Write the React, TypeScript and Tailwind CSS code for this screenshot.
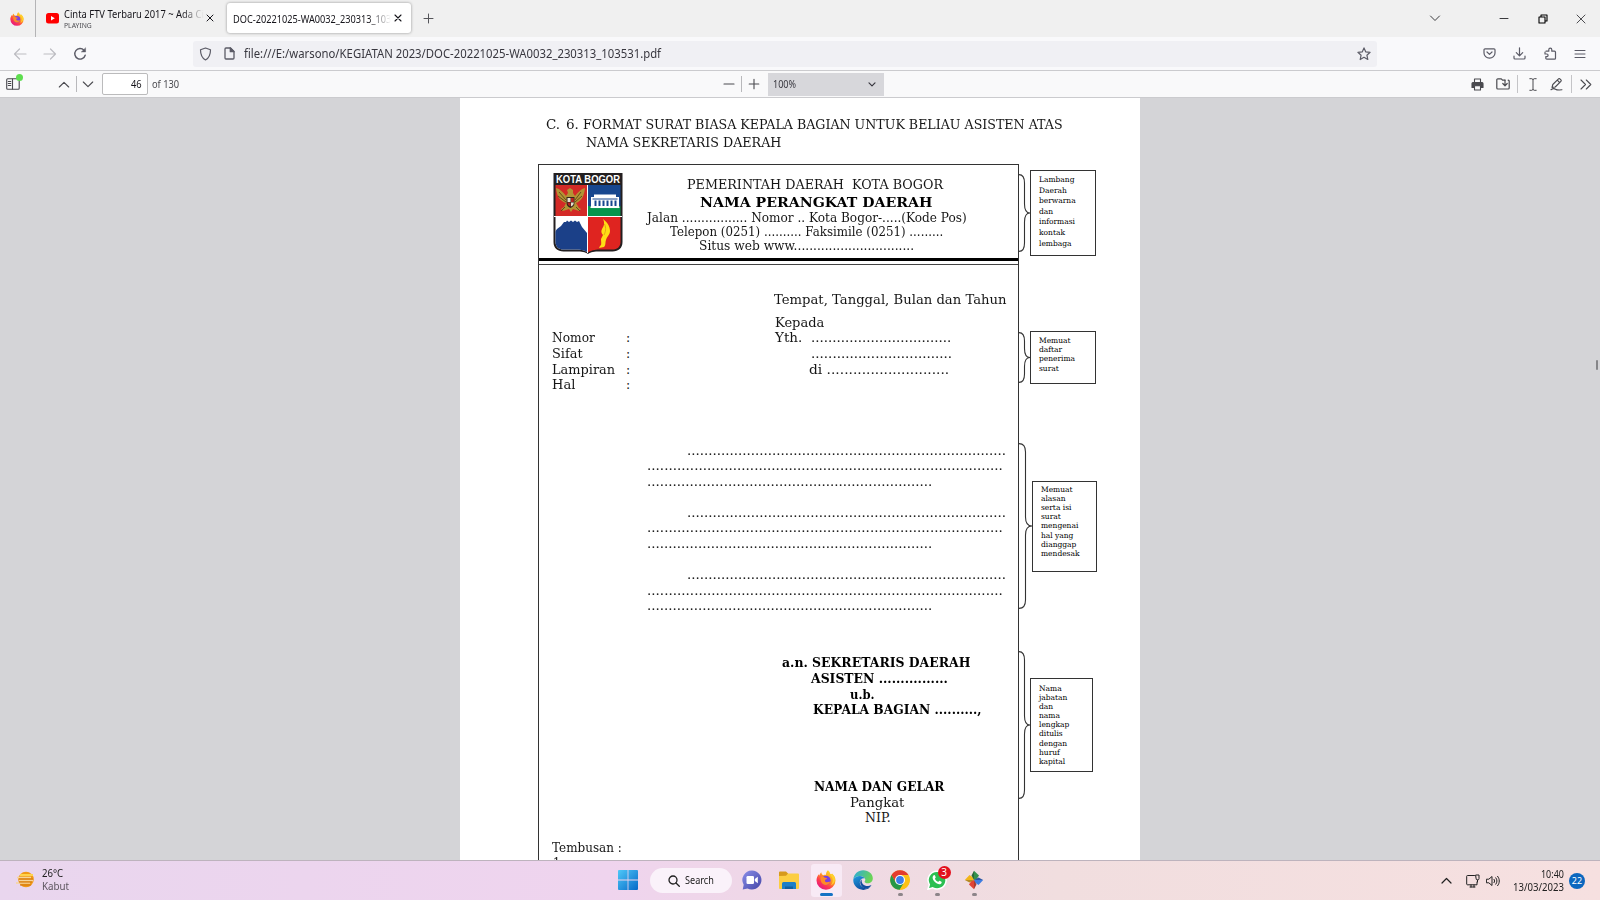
import React, { useLayoutEffect, useRef, useState } from 'react';

/** Text stretched horizontally so that it fills the width given in `className`. */
function Fit({ children, className = '' }: { children: string; className?: string }) {
  const outer = useRef<HTMLSpanElement>(null);
  const inner = useRef<HTMLSpanElement>(null);
  const [scale, setScale] = useState(1);
  useLayoutEffect(() => {
    if (!outer.current || !inner.current) return;
    setScale(outer.current.offsetWidth / inner.current.offsetWidth);
  }, [children]);
  return (
    <span ref={outer} className={`inline-block shrink-0 whitespace-pre ${className}`}>
      <span ref={inner} className="inline-block origin-left" style={{ transform: `scaleX(${scale})` }}>
        {children}
      </span>
    </span>
  );
}

function Line({ className = '', children }: { className?: string; children?: React.ReactNode }) {
  return <div className={`flex shrink-0 items-start leading-4 ${className}`}>{children}</div>;
}

function Svg({ className, box = '0 0 16 16', children, sw = 1.2 }: { className: string; box?: string; children: React.ReactNode; sw?: number }) {
  return (
    <svg className={`block shrink-0 ${className}`} viewBox={box} fill="none" stroke="currentColor" strokeWidth={sw} strokeLinecap="round" strokeLinejoin="round">
      {children}
    </svg>
  );
}

function FirefoxLogo({ className, id }: { className: string; id: string }) {
  return (
    <svg className={`block shrink-0 ${className}`} viewBox="0 0 20 20">
      <defs>
        <linearGradient id={id} x1="0.85" y1="0.05" x2="0.2" y2="0.95">
          <stop offset="0" stopColor="#ffe226" />
          <stop offset="0.4" stopColor="#ff9a1f" />
          <stop offset="0.7" stopColor="#ff3b4d" />
          <stop offset="1" stopColor="#e31587" />
        </linearGradient>
      </defs>
      <path fill={`url(#${id})`} d="M12 .3c1.300 1.300 2 2.300 2.300 3.600C15.500 4.200 16 4 16 3.500c2.200 1.800 3.500 4.300 3.500 7A9.500 9.300 0 0 1 .5 10.500C.5 8 1.500 5.600 2.800 4.200l.4 1.500C3.700 4.300 4.400 3 5.300 2.300c.1 1.400.7 2.400 2 2.900C8.500 4.900 9.300 4.800 10 4.900 9.900 3 10.700 1.300 12 .3Z" />
      <circle cx="10" cy="10.300" r="4.600" fill="#7b3fe0" />
      <path fill="#ff8a25" d="M4.600 7.200c1.600-.8 3.200-.6 4.400.5 1 .1 1.800.2 2 .5-.1.900-1.200 1.100-1.900 1.500-.4 1-.1 2.300 1.500 2.500 1.400.1 2.400-.8 3.600-.4-1 2.800-4.500 4.100-7.200 2.300C5.100 12.900 4.300 9.600 4.600 7.200Z" />
      <path fill="#ffd02e" d="M12 .3c2.800 2.700 2 5 4.300 7.500 1 2.700.2 6-1.900 7.800 4.200-1.500 5.900-6.500 3.500-9.800-.6 0-1.400-1-1.900-2.300 0 .5-.5.700-1.700.4C14 2.600 13.300 1.600 12 .3Z" />
    </svg>
  );
}

function TabBar() {
  return (
    <div className="flex h-[37px] shrink-0 items-start bg-[#f0f0f0] text-[#15141a]">
      <div className="flex h-[37px] w-9 items-center justify-center border-r border-[#b4b4b6]">
        <FirefoxLogo className="size-[14px] -translate-x-[1px]" id="ff-tab" />
      </div>
      <div className="flex h-[37px] w-[184px] pl-[10px]">
        <svg className="mt-[13px] block h-[11px] w-[13px] shrink-0" viewBox="0 0 13 11">
          <rect width="13" height="10.500" rx="2.500" fill="#f00" />
          <path d="M5 3v4.600l3.800-2.300Z" fill="#fff" />
        </svg>
        <div className="ml-[5px] w-[140px] pt-[6px] [mask-image:linear-gradient(to_right,#000_84%,transparent)]">
          <div className="h-[14px] text-[11px] leading-4"><Fit className="w-[140px]">Cinta FTV Terbaru 2017 ~ Ada Ci</Fit></div>
          <div className="text-[7.500px] leading-[11px] text-[#4b4b50]"><Fit className="w-[28px]">PLAYING</Fit></div>
        </div>
        <Svg className="mt-[14px] ml-[2px] size-2" box="0 0 8 8" sw={1}><path d="M1 1l6 6M7 1L1 7" /></Svg>
      </div>
      <div className="mt-[3px] ml-[7px] flex h-[30px] w-[184px] items-center rounded-[3px] bg-white pl-[6px] shadow-[0_0_3px_rgba(0,0,0,0.4)]">
        <div className="w-[158px] pt-px text-[11px] leading-4 [mask-image:linear-gradient(to_right,#000_86%,transparent)]"><Fit className="w-[158px]">DOC-20221025-WA0032_230313_103</Fit></div>
        <Svg className="ml-[3px] size-2" box="0 0 8 8" sw={1.1}><path d="M1 1l6 6M7 1L1 7" /></Svg>
      </div>
      <Svg className="mt-[13px] ml-[12px] size-[11px] text-[#55555a]" box="0 0 11 11" sw={1}><path d="M5.500 1v9M1 5.500h9" /></Svg>
      <div className="ml-auto flex h-[37px] items-center pr-[14px] text-[#3a3a3e]">
        <Svg className="mr-[58px] h-[7px] w-[12px]" box="0 0 12 7" sw={1}><path d="M1.500 1L6 5.500 10.500 1" /></Svg>
        <Svg className="mr-[29px] size-[10px]" box="0 0 10 10" sw={1}><path d="M1 4.500h8" /></Svg>
        <Svg className="mr-[28px] size-[10px] text-black" box="0 0 10 10" sw={1.1}><path d="M1 3h6v6H1zM3 3V1h6v6H7" /></Svg>
        <Svg className="size-[10px]" box="0 0 10 10" sw={0.9}><path d="M1 1l8 8M9 1L1 9" /></Svg>
      </div>
    </div>
  );
}

function AddressBar() {
  return (
    <div className="flex h-[33px] shrink-0 items-center bg-[#f9f9fb] text-[#5b5b66]">
      <Svg className="ml-[13px] size-[14px] text-[#bdbdc2]" box="0 0 14 14"><path d="M13 7H1.500M6.500 2l-5 5 5 5" /></Svg>
      <Svg className="ml-[16px] size-[14px] text-[#bdbdc2]" box="0 0 14 14"><path d="M1 7h11.500M7.500 2l5 5-5 5" /></Svg>
      <Svg className="ml-[16px] size-[14px]" box="0 0 14 14" sw={1.4}><path d="M12.200 8.200a5.300 5.300 0 1 1-1.200-5" /><path d="M12.600 1v4H8.500Z" fill="currentColor" strokeWidth=".4" /></Svg>
      <div className="ml-[106px] flex h-[26px] w-[1184px] items-center rounded-[3px] bg-[#f0f0f4]">
        <Svg className="ml-[6px] h-[14px] w-[13px]" box="0 0 13 14"><path d="M6.500 1l5 1.800c0 5-1.300 8.300-5 10.200-3.700-1.900-5-5.200-5-10.200Z" /></Svg>
        <Svg className="ml-[12px] h-[13px] w-[11px]" box="0 0 11 13" sw={1.300}><path d="M2 1h4.500L10 4.500V11a1 1 0 0 1-1 1H2a1 1 0 0 1-1-1V2a1 1 0 0 1 1-1Z" /><path d="M6.300 1v3.700H10Z" fill="currentColor" /></Svg>
        <div className="ml-[9px] pt-px text-[12px] leading-5 text-[#38373f]"><Fit className="w-[417px]">file:///E:/warsono/KEGIATAN 2023/DOC-20221025-WA0032_230313_103531.pdf</Fit></div>
        <Svg className="mr-[6px] ml-auto size-[14px]" box="0 0 14 14"><path d="M7 .9l1.800 4 4.300.4-3.200 2.900.9 4.300L7 10.300l-3.800 2.200.9-4.300L.9 5.300l4.300-.4Z" /></Svg>
      </div>
      <div className="ml-auto flex items-center pr-[14px]">
        <Svg className="mr-[17px] size-[13px]" box="0 0 13 13"><path d="M2 1.800h9a1 1 0 0 1 1 1v3.200a5.500 5.200 0 0 1-11 0V2.800a1 1 0 0 1 1-1Z" /><path d="M4 5l2.500 2.400L9 5" /></Svg>
        <Svg className="mr-[18px] size-[13px]" box="0 0 13 13"><path d="M6.500 .8v7.800M3.300 5.600l3.200 3.200 3.200-3.200M1 9v2a1 1 0 0 0 1 1h9a1 1 0 0 0 1-1V9" /></Svg>
        <Svg className="mr-[17px] size-[13px]" box="0 0 13 13"><path d="M2 4.200h2.800V2.700a1.500 1.500 0 0 1 3 0v1.500h2.700a1 1 0 0 1 1 1v6a1 1 0 0 1-1 1H2.800a1 1 0 0 1-1-1V9.600h1a1.300 1.300 0 0 0 0-2.600H1V5.200" /></Svg>
        <Svg className="h-[10px] w-[12px]" box="0 0 12 10" sw={1}><path d="M1 1.500h10M1 5h10M1 8.500h10" /></Svg>
      </div>
    </div>
  );
}

function PdfToolbar() {
  return (
    <div className="flex h-[28px] shrink-0 items-center justify-between border-y border-[#cbcbce] bg-[#f9f9fa] text-[#4a4a4f]">
      <div className="flex w-[500px] items-center text-[11px]">
        <div className="relative ml-[6px] w-[15px]">
          <Svg className="h-[12px] w-[14px]" box="0 0 14 12" sw={1.1}><rect x=".7" y=".8" width="12.500" height="10.400" rx="1" /><path d="M6.500 1v10M2.300 3.500h2.500M2.300 5.500h2.500M2.300 7.500h2.500" /></Svg>
          <span className="absolute -top-[4px] left-[10px] size-[7px] rounded-full bg-[#5ede4f]" />
        </div>
        <Svg className="ml-[37px] h-[7px] w-[12px]" box="0 0 12 7" sw={1.1}><path d="M1.300 6L6 1.300 10.700 6" /></Svg>
        <div className="mx-[6px] h-4 w-px bg-[#b8b8bb]" />
        <Svg className="-ml-px h-[7px] w-[12px]" box="0 0 12 7" sw={1.1}><path d="M1.300 1L6 5.700 10.700 1" /></Svg>
        <div className="ml-[8px] flex h-[22px] w-[46px] items-center justify-end rounded-[2px] border border-[#bbbbbc] bg-white pt-px pr-[5px] text-[#15141a]"><Fit className="w-[11px]">46</Fit></div>
        <div className="ml-[4px] pt-px"><Fit className="w-[27px]">of 130</Fit></div>
      </div>
      <div className="flex items-center">
        <Svg className="size-[12px]" box="0 0 12 12" sw={1.1}><path d="M1 6h10" /></Svg>
        <div className="mx-[6px] h-4 w-px bg-[#b8b8bb]" />
        <Svg className="size-[12px]" box="0 0 12 12" sw={1.1}><path d="M1.200 6h9.600M6 1.200v9.600" /></Svg>
        <div className="ml-[8px] flex h-[23px] w-[116px] items-center justify-between bg-[#d7d7db] pt-px pr-[8px] pl-[5px] text-[11px] text-[#38373f]">
          <Fit className="w-[23px]">100%</Fit>
          <Svg className="h-[5px] w-[8px]" box="0 0 8 5" sw={1.200}><path d="M1 .8l3 3 3-3" /></Svg>
        </div>
      </div>
      <div className="flex w-[494px] items-center justify-end pr-[8px]">
        <Svg className="mr-[12px] size-[13px]" box="0 0 13 13" sw={1.1}><path d="M3.500 4.500V1h6v3.500" /><path d="M2 4.500h9a1 1 0 0 1 1 1V9.500H1V5.500a1 1 0 0 1 1-1Z" fill="currentColor" /><path d="M3.500 7.800h6V12h-6Z" fill="#f9f9fa" /></Svg>
        <Svg className="mr-[7px] h-[12px] w-[14px]" box="0 0 14 12" sw={1.200}><path d="M9 2.200H6.500L5.300.8H1.800a1 1 0 0 0-1 1V10a1 1 0 0 0 1 1h10.400a1 1 0 0 0 1-1V3.200a1 1 0 0 0-1-1" /><path d="M9 2v5.500M6.800 5.500L9 7.800l2.200-2.300" /></Svg>
        <div className="mr-[11px] h-[18px] w-px bg-[#c4c4c7]" />
        <Svg className="mr-[13px] h-[13px] w-[8px]" box="0 0 8 13" sw={1}><path d="M.8.700h2L4 1.500 5.200.700h2M4 1.500v10M.8 12.300h2L4 11.500l1.200.8h2" /></Svg>
        <Svg className="mr-[8px] size-[13px]" box="0 0 13 13" sw={1.100}><path d="M2 9.500l.8-3L8.500.9a1 1 0 0 1 1.400 0l1 1a1 1 0 0 1 0 1.400L5.200 9ZM7.300 2.200l2.300 2.300M1 11.700c2-1.500 3.500-1.200 4.500-.5s2.500 1 6.500.6" /></Svg>
        <div className="mr-[8px] h-[18px] w-px bg-[#c4c4c7]" />
        <Svg className="h-[11px] w-[12px]" box="0 0 12 11" sw={1.100}><path d="M1 1l4.500 4.500L1 10M6.300 1l4.500 4.500L6.300 10" /></Svg>
      </div>
    </div>
  );
}

function CityCrest() {
  return (
    <svg className="mt-[8px] block h-[81px] w-[70px] shrink-0" viewBox="0 0 70 81">
      <defs>
        <clipPath id="crest"><path d="M2.500 11h65v58c0 5-3.500 7.500-8 7.500H47c-6 0-9 1-12 3-3-2-6-3-12-3H10.500c-4.500 0-8-2.500-8-7.500Z" /></clipPath>
      </defs>
      <path d="M.5 0h69v69c0 6-4 9.500-10 9.500H47c-6 0-9 .5-12 2.500-3-2-6-2.500-12-2.500H10.500C4.500 78.500.5 75 .5 69Z" fill="#231f20" />
      <g clipPath="url(#crest)">
        <rect x="1" y="12" width="33" height="31" fill="#d32a26" />
        <rect x="35" y="12" width="34" height="21" fill="#17478f" />
        <rect x="35" y="33" width="34" height="10" fill="#05944c" />
        <rect x="1" y="44" width="33" height="37" fill="#fff" />
        <path d="M1 60l3-4 4-3 3-4h2l1-1.500 2 1.500 2-1.500 2 1.500 2-1.500 2 1.500 2-1 3 6 5 6V81H1Z" fill="#1b4088" />
        <rect x="35" y="44" width="34" height="37" fill="#df2420" />
      </g>
      <path d="M34.500 12v68M1 43.500h68" stroke="#fff" strokeWidth="1" />
      <text x="35" y="9.600" textAnchor="middle" textLength="64" lengthAdjust="spacingAndGlyphs" fontFamily="Liberation Sans, sans-serif" fontSize="10" fontWeight="bold" fill="#fff">KOTA BOGOR</text>
      <path d="M3 15c4 1 7 4 10 8l2-3-1-3 3-2 3 2v3l2 3c3-4 6-7 10-8-1 9-4 13-9 15l3 5 2 1-2 2-6-2-2 3-2-3-6 2-2-2 3-2 2-4C7 28 4 24 3 15Z" fill="#b39335" />
      <path d="M6 19l7 8M5 23l8 6M28 19l-6 8M29 23l-7 6M12 34l-4 4M23 34l4 4" stroke="#594418" strokeWidth=".9" />
      <path d="M13.500 24h8v6c0 3-2 4-4 5-2-1-4-2-4-5Z" fill="#34241c" />
      <path d="M14.500 25h3v4h-3zM18 29.500h2.800c0 2-1 3-2.800 4z" fill="#e8e0cf" />
      <path d="M18 25h2.800v4H18zM14.500 29.500h3v4c-2-1-3-2-3-4z" fill="#b52320" />
      <path d="M38 24h28v10H38zM41 21.500h22V24H41z" fill="#fff" />
      <path d="M37.500 34.300h29" stroke="#fff" strokeWidth="1.500" />
      <path d="M39.500 26h25" stroke="#17478f" strokeWidth="1" />
      <path d="M42.500 27.500V33M46.500 27.500V33M50.500 27.500V33M54.500 27.500V33M58.500 27.500V33M62.500 27.500V33" stroke="#17478f" strokeWidth="2" />
      <path d="M50 46c4 3 7 7 7 12 0 4-3 5-4 9-1 3 0 5-2 7l-5 1 1-2c2-1 1-4 1-7l2-4c-2-2-2-4-1-6 2-3 3-6 1-10Z" fill="#ffde15" />
      <path d="M51.500 51c2 4 1 8-.5 11" stroke="#e59d17" strokeWidth=".9" fill="none" />
    </svg>
  );
}

function Letter() {
  return (
    <div className="flex h-[696px] w-[481px] shrink-0 flex-col overflow-hidden border-x border-t border-[#333] text-[12.5px] text-[#161616]">
      <div className="flex h-[93px] shrink-0 pl-[14px]">
        <CityCrest />
        <div className="flex flex-col pt-[12px]">
          <Line className="h-[17px] pl-[64px]"><Fit className="w-[256px]">PEMERINTAH DAERAH  KOTA BOGOR</Fit></Line>
          <Line className="h-[16px] pl-[77px] text-[13.5px] font-bold text-black"><Fit className="w-[233px]">NAMA PERANGKAT DAERAH</Fit></Line>
          <Line className="h-[14px] pl-[24px] text-[12px]"><Fit className="w-[320px]">Jalan ................. Nomor .. Kota Bogor-.....(Kode Pos)</Fit></Line>
          <Line className="h-[14px] pl-[47px] text-[12px]"><Fit className="w-[273px]">Telepon (0251) .......... Faksimile (0251) .........</Fit></Line>
          <Line className="h-[14px] pl-[76px] text-[12px]"><Fit className="w-[215px]">Situs web www...............................</Fit></Line>
        </div>
      </div>
      <div className="h-[7px] shrink-0 border-t-[3px] border-b border-t-black border-b-[#444]" />

      <Line className="mt-[27px] h-[23px] pl-[235px]"><Fit className="w-[232px]">Tempat, Tanggal, Bulan dan Tahun</Fit></Line>
      <Line className="h-[15px] pl-[236px]"><Fit className="w-[49px]">Kepada</Fit></Line>
      <Line className="h-[15.5px] pl-[13px]">
        <div className="w-[74px]"><Fit className="w-[43px]">Nomor</Fit></div>
        <div className="w-[149px]">:</div>
        <div className="w-[36px]"><Fit className="w-[27px]">Yth.</Fit></div>
        <Fit className="w-[140px]">.................................</Fit>
      </Line>
      <Line className="h-[16px] pl-[13px]">
        <div className="w-[74px]"><Fit className="w-[31px]">Sifat</Fit></div>
        <div className="w-[185px]">:</div>
        <Fit className="w-[141px]">.................................</Fit>
      </Line>
      <Line className="h-[15.5px] pl-[13px]">
        <div className="w-[74px]"><Fit className="w-[63px]">Lampiran</Fit></div>
        <div className="w-[183px]">:</div>
        <Fit className="w-[140px]">di ............................</Fit>
      </Line>
      <Line className="h-[65.5px] pl-[13px]">
        <div className="w-[74px]"><Fit className="w-[23px]">Hal</Fit></div>
        <div>:</div>
      </Line>

      {[0, 1, 2].map((i) => (
        <div key={i} className="h-[62.3px] shrink-0">
          <Line className="h-[15.5px] pl-[148px]"><Fit className="w-[319px]">...........................................................................</Fit></Line>
          <Line className="h-[15.5px] pl-[108px]"><Fit className="w-[356px]">...................................................................................</Fit></Line>
          <Line className="h-[15.5px] pl-[108px]"><Fit className="w-[285px]">...................................................................</Fit></Line>
        </div>
      ))}

      <div className="mt-[25.5px] shrink-0 font-bold text-black">
        <Line className="h-[16px] pl-[243px]"><Fit className="w-[188px]">a.n. SEKRETARIS DAERAH</Fit></Line>
        <Line className="h-[16px] pl-[272px]"><Fit className="w-[137px]">ASISTEN ................</Fit></Line>
        <Line className="h-[15.500px] pl-[311px]"><Fit className="w-[25px]">u.b.</Fit></Line>
        <Line className="h-[76.5px] pl-[274px]"><Fit className="w-[169px]">KEPALA BAGIAN ..........,</Fit></Line>
        <Line className="h-[16px] pl-[275px]"><Fit className="w-[130px]">NAMA DAN GELAR</Fit></Line>
      </div>
      <Line className="h-[15px] pl-[311px]"><Fit className="w-[54px]">Pangkat</Fit></Line>
      <Line className="h-[30px] pl-[326px]"><Fit className="w-[26px]">NIP.</Fit></Line>
      <Line className="h-[15px] pl-[13px]"><Fit className="w-[70px]">Tembusan :</Fit></Line>
      <Line className="h-[16px] pl-[14px]"><Fit className="w-[11px]">1.</Fit></Line>
    </div>
  );
}

function Bracket({ h, w }: { h: number; w: number }) {
  const x = w / 2;
  const m = h / 2;
  return (
    <svg className="block shrink-0" width={w} height={h} fill="none" stroke="#333" strokeWidth="1.1">
      <path d={`M0 .6Q${x} .6 ${x} 9V${m - 9}Q${x} ${m} ${w} ${m}Q${x} ${m} ${x} ${m + 9}V${h - 9}Q${x} ${h - 0.6} 0 ${h - 0.6}`} />
    </svg>
  );
}

function Note({ className, lines }: { className: string; lines: string[] }) {
  return (
    <div className={`border border-[#333] pl-[8px] text-[7.5px] text-black ${className}`}>
      {lines.map((l) => <div key={l} className="whitespace-pre">{l}</div>)}
    </div>
  );
}

function SideNotes() {
  return (
    <div className="flex flex-col pt-[6px]">
      <div className="flex h-[86px] shrink-0 items-center">
        <Bracket h={78} w={11} />
        <Note className="h-[86px] w-[66px] pt-[4px] leading-[10.6px]" lines={['Lambang', 'Daerah', 'berwarna', 'dan', 'informasi', 'kontak', 'lembaga']} />
      </div>
      <div className="mt-[75px] flex h-[53px] shrink-0 items-center">
        <Bracket h={51} w={11} />
        <Note className="h-[53px] w-[66px] pt-[4px] leading-[9.2px]" lines={['Memuat', 'daftar', 'penerima', 'surat']} />
      </div>
      <div className="mt-[59px] flex h-[166px] shrink-0 items-center">
        <Bracket h={166} w={13} />
        <Note className="h-[91px] w-[65px] pt-[3px] leading-[9.200px]" lines={['Memuat', 'alasan', 'serta isi', 'surat', 'mengenai', 'hal yang', 'dianggap', 'mendesak']} />
      </div>
      <div className="mt-[42px] flex h-[148px] shrink-0 items-center">
        <Bracket h={148} w={11} />
        <Note className="h-[94px] w-[63px] pt-[5px] leading-[9.100px]" lines={['Nama', 'jabatan', 'dan', 'nama', 'lengkap', 'ditulis', 'dengan', 'huruf', 'kapital']} />
      </div>
    </div>
  );
}

function Viewer() {
  return (
    <div className="flex min-h-0 flex-1 justify-center overflow-hidden bg-[#d4d4d7]">
      <div className="w-[460px] shrink-0" />
      <div className="w-[680px] shrink-0 bg-white [font-family:'DejaVu_Serif',serif]">
        <div className="h-[66px] pt-[19px] text-[12.5px] text-[#161616]">
          <Line className="h-[18px] pl-[86px]">
            <Fit className="w-[14px]">C.</Fit>
            <Fit className="ml-[6px] w-[13px]">6.</Fit>
            <Fit className="ml-[4px] w-[480px]">FORMAT SURAT BIASA KEPALA BAGIAN UNTUK BELIAU ASISTEN ATAS</Fit>
          </Line>
          <Line className="h-[16px] pl-[126px]"><Fit className="w-[195px]">NAMA SEKRETARIS DAERAH</Fit></Line>
        </div>
        <div className="flex pl-[78px]">
          <Letter />
          <SideNotes />
        </div>
      </div>
      <div className="flex w-[460px] shrink-0 justify-end pt-[262px] pr-[2px]">
        <div className="h-[10px] w-[2px] rounded-full bg-[#858588]" />
      </div>
    </div>
  );
}

function TaskSlot({ children, running }: { children: React.ReactNode; running?: boolean }) {
  return (
    <div className="flex h-[39px] w-[37px] shrink-0 flex-col items-center pt-[9px]">
      {children}
      {running && <div className="mt-[3px] h-[3px] w-[5px] shrink-0 rounded-full bg-[#8d8589]" />}
    </div>
  );
}

function Taskbar() {
  return (
    <div className="flex h-[40px] shrink-0 justify-between border-t border-[#bdb3bd] bg-[linear-gradient(90deg,#e9d6ee_0%,#efd4ee_38%,#efd9e4_52%,#f1dedf_66%,#f6e0e0_100%)] text-[#202020]">
      <div className="flex w-[500px] pl-[16px]">
        <svg className="mt-[9px] block h-[19px] w-[19px] shrink-0" viewBox="0 0 19 19">
          <circle cx="10" cy="9.500" r="7.800" fill="#f19a17" />
          <path d="M4 5h13" stroke="#ffd34d" strokeWidth="2" />
          <path d="M1 7.500h14M3 10.500h14M0 13h14" stroke="#f6d59a" strokeWidth="1.300" />
          <path d="M3 9h14M3 12h13M4 15h11" stroke="#cf7412" strokeWidth="1" />
        </svg>
        <div className="pt-[6px] pl-[7px] text-[10.5px] leading-[13px]">
          <div><Fit className="w-[21px]">26°C</Fit></div>
          <div className="text-[#5c555e]"><Fit className="w-[27px]">Kabut</Fit></div>
        </div>
      </div>
      <div className="flex">
        <svg className="mt-[9px] block size-[20px]" viewBox="0 0 20 20">
          <defs><linearGradient id="win" x1="0" y1="0" x2="1" y2="1"><stop offset="0" stopColor="#4fc8f8" /><stop offset="1" stopColor="#0669c8" /></linearGradient></defs>
          <path d="M0 1a1 1 0 0 1 1-1h8.600v9.600H0ZM10.400 0H19a1 1 0 0 1 1 1v8.600h-9.600ZM0 10.400h9.600V20H1a1 1 0 0 1-1-1ZM10.400 10.400H20V19a1 1 0 0 1-1 1h-8.600Z" fill="url(#win)" />
        </svg>
        <div className="mt-[7px] ml-[12px] flex h-[25px] w-[82px] items-center rounded-full bg-[#faf2fa] pl-[18px] text-[11px]">
          <Svg className="size-[12px]" box="0 0 12 12" sw={1.300}><circle cx="5" cy="5" r="4" /><path d="M8 8l3.300 3.300" /></Svg>
          <Fit className="ml-[5px] w-[29px]">Search</Fit>
        </div>
        <div className="w-[2px]" />
        <TaskSlot>
          <svg className="block size-[20px]" viewBox="0 0 20 20">
            <defs><linearGradient id="chat" x1="0" y1="0" x2="1" y2="1"><stop offset="0" stopColor="#8a8ee8" /><stop offset="1" stopColor="#4446a8" /></linearGradient></defs>
            <path d="M10 .5a9.500 9.500 0 1 1-4.500 17.900L.7 19.500l1-4.700A9.500 9.500 0 0 1 10 .5Z" fill="url(#chat)" />
            <rect x="4.500" y="6" width="7.500" height="8" rx="1.300" fill="#fff" /><path d="M12.800 9l3-2.200v6.400l-3-2.200Z" fill="#fff" />
          </svg>
        </TaskSlot>
        <TaskSlot>
          <svg className="block size-[20px]" viewBox="0 0 20 20">
            <path d="M0 2.500a1 1 0 0 1 1-1h6l2 2v3H0Z" fill="#d79a1c" />
            <path d="M0 6l7-.2 2-2.300h10a1 1 0 0 1 1 1V18a1 1 0 0 1-1 1H1a1 1 0 0 1-1-1Z" fill="#fcce42" />
            <path d="M3 19v-5.500a1.500 1.500 0 0 1 1.500-1.500h11a1.500 1.500 0 0 1 1.500 1.500V19Z" fill="#1c7fc7" /><path d="M6 16.500h8V19H6Z" fill="#125f9e" />
          </svg>
        </TaskSlot>
        <div className="mt-[3px] mr-[3px] ml-[3px] flex h-[33px] w-[31px] flex-col items-center rounded-[3px] bg-[#f8eaf5] pt-[6px]">
          <FirefoxLogo className="size-[20px]" id="ff-task" />
          <div className="mt-[3px] h-[3px] w-[13px] shrink-0 rounded-full bg-[#1573c4]" />
        </div>
        <TaskSlot>
          <svg className="block size-[20px]" viewBox="0 0 20 20">
            <defs>
              <linearGradient id="edge-a" x1="0" y1="0" x2="1" y2=".4"><stop offset="0" stopColor="#2aa9e0" /><stop offset="1" stopColor="#6ad455" /></linearGradient>
              <linearGradient id="edge-b" x1="0" y1="0" x2=".6" y2="1"><stop offset="0" stopColor="#1f9de0" /><stop offset="1" stopColor="#0c4a9c" /></linearGradient>
            </defs>
            <path d="M.3 9.500C.8 4 5 .2 10.200.2c5.500 0 9.600 3.800 9.600 8 0 3.200-2.400 5-5 5-2 0-3.200-.7-3.200-1.500 0-.5.7-.8.7-2C12.300 8 10 6 7 6 3.700 6 1.400 7.500.3 9.500Z" fill="url(#edge-a)" />
            <path d="M.3 9.500C1.400 7.300 4 6 6.700 6c2.500 0 4.300 1 5.100 2.300-2.600-.5-5 1.200-5 4 0 3.600 3.400 6 7 6 1.500 0 2.600-.6 3.600-1.200-1.700 1.800-4.300 2.800-7.200 2.800C4.500 19.800-.2 15.300.3 9.500Z" fill="url(#edge-b)" />
            <path d="M8.700 9.200c-.8 4.300 2.800 7.300 6.600 6.800 1.300-.1 2.500-.8 3.200-1-1.100 2.300-3 3.500-5.400 3.500-4.500 0-8-6.500-4.400-9.300Z" fill="#124f9e" />
          </svg>
        </TaskSlot>
        <TaskSlot running>
          <svg className="block size-[20px] shrink-0" viewBox="0 0 20 20">
            <circle cx="10" cy="10" r="9.800" fill="#fbc116" />
            <path d="M1.500 5A9.800 9.800 0 0 1 18.500 5.100H10L5.800 12.500Z" fill="#e33b2e" />
            <path d="M1.500 5a9.800 9.800 0 0 0 8.300 14.800l4.400-7.400H5.800Z" fill="#279847" />
            <path d="M18.500 5.100H10v4.900l4.200 2.400-4.400 7.400A9.800 9.800 0 0 0 18.500 5.100Z" fill="#fbc116" />
            <circle cx="10" cy="10" r="5" fill="#fff" /><circle cx="10" cy="10" r="3.900" fill="#3b7de9" />
          </svg>
        </TaskSlot>
        <div className="relative">
          <TaskSlot running>
            <svg className="block size-[20px] shrink-0" viewBox="0 0 20 20">
              <path d="M10 1.200A8.900 8.900 0 1 1 5.700 17.800L1 19.200l1.300-4.600A8.900 8.900 0 0 1 10 1.200Z" fill="#2bbf52" stroke="#fff" strokeWidth="1.500" />
              <path d="M6.500 5.500c.6-.6 1.200-.5 1.500.1l.7 1.700c.1.500-.5 1-.8 1.400.7 1.500 1.800 2.500 3.300 3.200.5-.4.900-1.300 1.500-1.100l1.700.9c.7.500.1 1.800-.8 2.300-1.700.9-4.300-.6-5.700-2-1.700-1.700-3.300-4.500-1.400-6.500Z" fill="#fff" />
            </svg>
          </TaskSlot>
          <div className="absolute top-[5px] left-[19px] flex size-[13px] items-center justify-center rounded-full bg-[#e3101d] text-[10px] text-white">3</div>
        </div>
        <TaskSlot running>
          <svg className="block size-[20px] shrink-0" viewBox="0 0 20 20">
            <path d="M10 10V.8l5 4.700-2.500 3.700Z" fill="#34914c" />
            <path d="M10 10h9.200l-4.700 5-3.700-2.500Z" fill="#3e7de0" />
            <path d="M10 10v9.200l-5-4.700 2.500-3.700Z" fill="#e04335" />
            <path d="M10 10H.8l4.700-5 3.700 2.500Z" fill="#f2b51a" />
            <path d="M10 10V.8L7.500 5.500Z" fill="#2a6b3a" />
            <path d="M10 10h9.200l-4.700-2.500Z" fill="#2b57a5" />
            <path d="M10 10v9.200l2.500-4.700Z" fill="#a83a30" />
            <path d="M10 10H.8l4.700 2.500Z" fill="#b58a22" />
          </svg>
        </TaskSlot>
      </div>
      <div className="flex w-[490px] items-center justify-end pr-[15px]">
        <Svg className="mr-[14px] h-[7px] w-[11px]" box="0 0 11 7" sw={1.200}><path d="M1 6l4.500-4.500L10 6" /></Svg>
        <Svg className="mr-[6px] size-[14px]" box="0 0 14 14" sw={1}><path d="M8.500 1.500H1.500a.8.800 0 0 0-.8.800V10a.8.800 0 0 0 .8.800H11V8M4 13h5M5 11v2M8 11v2M10 1h3v3.500a1.500 1.500 0 0 1-3 0ZM11.500 6v2" /></Svg>
        <Svg className="mr-[13px] h-[12px] w-[14px]" box="0 0 14 12" sw={1}><path d="M.8 4.200h2L6 1.500v9L2.800 7.800h-2ZM8 4.300c.8 1 .8 2.400 0 3.400M9.800 2.800c1.600 1.900 1.600 4.500 0 6.400M11.600 1.300c2.300 2.700 2.300 6.700 0 9.400" /></Svg>
        <div className="flex flex-col items-end text-[10.5px] leading-[13px]">
          <Fit className="w-[23px]">10:40</Fit>
          <Fit className="w-[51px]">13/03/2023</Fit>
        </div>
        <div className="ml-[5px] flex size-[16px] items-center justify-center rounded-full bg-[#0b67bf] text-[9px] text-white">22</div>
      </div>
    </div>
  );
}

export default function App() {
  return (
    <div className="flex h-[900px] w-[1600px] flex-col overflow-hidden [font-family:'Noto_Sans','Open_Sans',sans-serif]">
      <TabBar />
      <AddressBar />
      <PdfToolbar />
      <Viewer />
      <Taskbar />
    </div>
  );
}
